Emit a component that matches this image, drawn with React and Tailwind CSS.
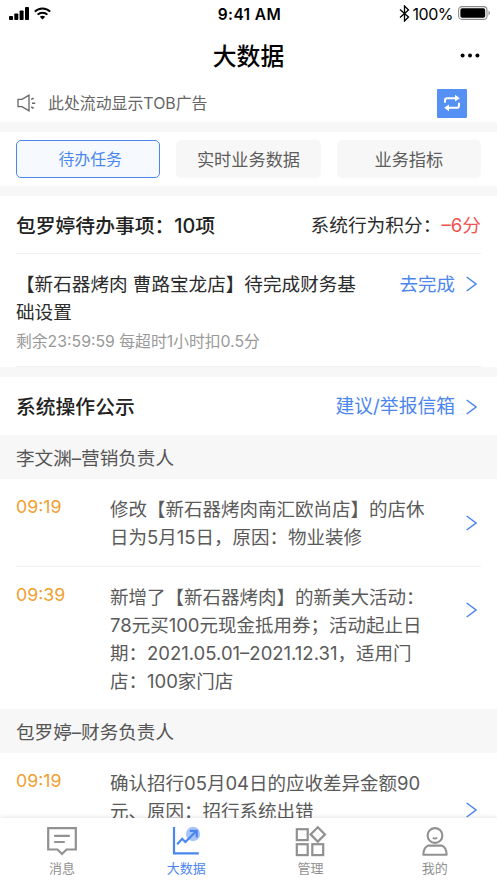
import React, { useState } from "react";

const TABS = ["待办任务", "实时业务数据", "业务指标"];

const LOGS = [
  {
    owner: "李文渊–营销负责人",
    rows: [
      {
        time: "09:19",
        lines: ["修改【新石器烤肉南汇欧尚店】的店休", "日为5月15日，原因：物业装修"],
        rowClass: "h-[87px]",
        arrowClass: "mt-5",
      },
      {
        time: "09:39",
        lines: [
          "新增了【新石器烤肉】的新美大活动：",
          "78元买100元现金抵用券；活动起止日",
          "期：2021.05.01–2021.12.31，适用门",
          "店：100家门店",
        ],
        rowClass: "h-[143px] border-t border-[#f0f0f0]",
        arrowClass: "mt-[19px]",
      },
    ],
  },
  {
    owner: "包罗婷–财务负责人",
    rows: [
      {
        time: "09:19",
        lines: ["确认招行05月04日的应收差异金额90", "元、原因：招行系统出错"],
        rowClass: "h-[116px]",
        arrowClass: "mt-[33px]",
      },
    ],
  },
];

const Arrow = ({ className = "" }) => (
  <svg className={`w-[11px] h-4 shrink-0 ${className}`} viewBox="0 0 11 16" fill="none" stroke="#4b86ee" strokeWidth="1.5">
    <path d="M0.7 1L10 8L0.7 15" />
  </svg>
);

const StatusBar = () => (
  <div className="h-7 shrink-0 grid grid-cols-3 items-center text-black px-[9px]">
    <div className="flex items-center gap-[5px] -mt-[2px]">
      <svg className="w-5 h-[13px]" viewBox="0 0 20 13">
        <rect x="0" y="9" width="4" height="4" rx="0.8" />
        <rect x="5.3" y="6.5" width="4" height="6.5" rx="0.8" />
        <rect x="10.6" y="3.5" width="4" height="9.5" rx="0.8" />
        <rect x="16" y="0" width="4" height="13" rx="0.8" />
      </svg>
      <svg className="w-[17px] h-[13px]" viewBox="0 0 17 13" fill="none" stroke="#000" strokeWidth="2">
        <path d="M0.8 4.6C5 0.3 12 0.3 16.2 4.6" />
        <path d="M3.6 7.6C6.3 5 10.7 5 13.4 7.6" />
        <path d="M5.8 9.8C7.3 8.4 9.7 8.4 11.2 9.8L8.5 12.6Z" fill="#000" stroke="none" />
      </svg>
    </div>
    <div className="text-center text-[15.5px] font-semibold tracking-[0.4px] pl-[2px] pt-[1px]">9:41 AM</div>
    <div className="flex items-center justify-end -mr-[3px] -mt-[2px]">
      <svg className="w-[11px] h-[17px] mr-[3px]" viewBox="0 0 11 17" fill="none" stroke="#000" strokeWidth="1.3">
        <path d="M1 4.5L9.5 12L5.5 16V1L9.5 5L1 12.5" />
      </svg>
      <span className="text-[16px] tracking-[-0.5px] mr-[5px] pt-[2px]">100%</span>
      <svg className="w-[33px] h-[14px]" viewBox="0 0 33 14">
        <rect x="0.6" y="0.6" width="28.4" height="12.8" rx="3.4" fill="none" stroke="#8a8a8a" strokeWidth="1.1" />
        <rect x="2.4" y="2.3" width="24.8" height="9.4" rx="1.8" />
        <path d="M30.5 4.8C32.3 5.4 32.3 8.6 30.5 9.2Z" fill="#8a8a8a" />
      </svg>
    </div>
  </div>
);

const MessageIcon = () => (
  <svg className="w-8 h-8" viewBox="0 0 32 32" fill="none" stroke="#919191" strokeWidth="2.2">
    <path d="M2.2 3.2H29.8V24.5H20.5L16 29L11.5 24.5H2.2Z" />
    <path d="M9 10.8H23M9 17H18" strokeLinecap="round" />
  </svg>
);

const ChartIcon = () => (
  <svg className="w-8 h-8" viewBox="0 0 32 32" fill="none" stroke="#4b86ee" strokeWidth="2.2">
    <circle cx="23" cy="9" r="7.2" fill="#a9c6fb" stroke="none" />
    <path d="M4 2V28.3H28.8" />
    <path d="M7.2 19.2L12.2 13.8L15.4 17L26 6.4" />
    <path d="M19.8 5.8H26.8V12.5" />
  </svg>
);

const ManageIcon = () => (
  <svg className="w-8 h-8" viewBox="0 0 32 32" fill="none" stroke="#919191" strokeWidth="2.2">
    <rect x="1.8" y="4.2" width="10.9" height="10.9" />
    <rect x="1.8" y="19.2" width="10.9" height="10.9" />
    <rect x="17.3" y="19.2" width="10.9" height="10.9" />
    <path d="M22.8 2.2L30 9.4L22.8 16.6L15.6 9.4Z" />
  </svg>
);

const MineIcon = () => (
  <svg className="w-8 h-8" viewBox="0 0 32 32" fill="none" stroke="#919191" strokeWidth="2.1">
    <circle cx="16" cy="10.5" r="7.4" />
    <path d="M13.8 12.6Q16 14.8 18.2 12.6" strokeWidth="1.7" />
    <path d="M9.5 20.6H22.5C25.8 21.8 27.6 24.8 27.6 29.8H4.4C4.4 24.8 6.2 21.8 9.5 20.6Z" strokeLinejoin="round" />
  </svg>
);

const NAV = [
  { label: "消息", icon: MessageIcon },
  { label: "大数据", icon: ChartIcon, active: true },
  { label: "管理", icon: ManageIcon },
  { label: "我的", icon: MineIcon },
];

const App = () => {
  const [tab, setTab] = useState(0);

  return (
    <div className="w-[497px] h-[883px] flex flex-col overflow-hidden bg-white text-[#2b2b2b] whitespace-nowrap font-['Inter','Noto_Sans_CJK_SC',sans-serif]">
      <StatusBar />

      {/* Title */}
      <div className="h-14 shrink-0 flex items-center px-[17px]">
        <div className="w-5" />
        <h1 className="flex-1 text-center text-[23.8px] font-medium text-black pt-[2px]">大数据</h1>
        <svg className="w-5 h-5" viewBox="0 0 20 20">
          <circle cx="2.6" cy="9.5" r="2" />
          <circle cx="10" cy="9.5" r="2" />
          <circle cx="17.4" cy="9.5" r="2" />
        </svg>
      </div>

      {/* Notice */}
      <div className="h-[38px] shrink-0 flex items-center pl-[17px] pr-[30px] text-[#666]">
        <svg className="w-5 h-[18px] mr-[11px]" viewBox="0 0 20 18" fill="none" stroke="#666" strokeWidth="1.3">
          <path d="M1 5.4H5L12 1.2V16.8L5 12.6H1Z" />
          <path d="M14.2 5.4L16.6 4.2M15 9.2H18.2M14.2 13L16.6 14.2" strokeWidth="1.6" />
        </svg>
        <span className="flex-1 text-[15.9px] pt-[2px]">此处流动显示TOB广告</span>
        <button className="w-[30px] h-[29px] bg-[#5590f5] rounded-[1px] flex items-center justify-center">
          <svg className="w-[18px] h-[18px]" viewBox="0 0 18 18" fill="none" stroke="#fff" strokeWidth="2">
            <path d="M2 8.8V6.4Q2 4.2 4.2 4.2H13" />
            <path d="M16 8.8V11.4Q16 13.8 13.8 13.8H5" />
            <path d="M12 0.8L16.8 4.2L12 7.6ZM6 10.4L1.2 13.8L6 17.2Z" fill="#fff" stroke="none" />
          </svg>
        </button>
      </div>

      {/* Tabs */}
      <div className="h-[74px] shrink-0 border-y-[10px] border-[#f7f7f7] px-4 grid grid-cols-3 items-center gap-4">
        {TABS.map((name, i) => (
          <button
            key={name}
            onClick={() => setTab(i)}
            className={
              tab === i
                ? "h-[38px] pt-[2px] pl-1 rounded-[5px] border border-[#4b86ee] bg-[#f6faff] text-[#4b86ee] text-[15.9px]"
                : "h-[38px] pt-[1px] rounded-[5px] bg-[#f7f7f7] text-[#5c5c5c] text-[17.2px]"
            }
          >
            {name}
          </button>
        ))}
      </div>

      {/* Todo */}
      <div className="mx-4 h-[58px] shrink-0 flex items-center justify-between border-b border-[#f0f0f0]">
        <h2 className="text-[19.8px] font-medium text-[#222] pt-1">包罗婷待办事项：10项</h2>
        <div className="text-[18.7px] pt-[3px]">
          系统行为积分：<span className="text-[#f0524f]">–6分</span>
        </div>
      </div>
      <div className="mx-4 h-[113px] shrink-0 pt-4 flex justify-between border-b border-[#f0f0f0]">
        <div>
          <p className="text-[18.6px] leading-7">
            【新石器烤肉 曹路宝龙店】待完成财务基
            <br />
            础设置
          </p>
          <p className="text-[15.8px] leading-8 text-[#999]">剩余23:59:59 每超时1小时扣0.5分</p>
        </div>
        <div className="flex items-center h-7 mr-1 text-[18.5px] text-[#4b86ee]">
          <span className="pt-[1px]">去完成</span>
          <Arrow className="ml-[11px]" />
        </div>
      </div>
      <div className="h-[10px] shrink-0 bg-[#f7f7f7]" />

      {/* Public log */}
      <div className="px-4 h-[58px] shrink-0 flex items-center justify-between">
        <h2 className="text-[19.8px] font-medium text-[#222] pt-1">系统操作公示</h2>
        <div className="flex items-center mr-1 pt-[2px] text-[18.8px] text-[#4b86ee]">
          建议/举报信箱
          <Arrow className="ml-[11px]" />
        </div>
      </div>
      <div className="flex-1 min-h-0 overflow-hidden">
        {LOGS.map((group) => (
          <div key={group.owner}>
            <div className="h-11 px-4 pt-[3px] flex items-center bg-[#f7f7f7] text-[18.6px] text-[#555]">{group.owner}</div>
            {group.rows.map((row) => (
              <div key={row.time} className={`mx-4 flex pt-4 text-[18.5px] leading-7 ${row.rowClass}`}>
                <div className="w-[94px] shrink-0 -mt-[2px] text-[17.8px] text-[#f0a030]">{row.time}</div>
                <div className="flex-1 text-[#5a5a5a]">
                  {row.lines.map((line) => (
                    <div key={line}>{line}</div>
                  ))}
                </div>
                <Arrow className={`mr-1 ${row.arrowClass}`} />
              </div>
            ))}
          </div>
        ))}
      </div>

      {/* Bottom nav */}
      <div className="relative h-[65px] shrink-0 grid grid-cols-4 bg-white shadow-[0_-1px_4px_rgba(0,0,0,0.1)]">
        {NAV.map(({ label, icon: Icon, active }) => (
          <div
            key={label}
            className={`flex flex-col items-center pt-[7px] text-[13px] leading-5 ${active ? "text-[#4b86ee]" : "text-[#919191]"}`}
          >
            <Icon />
            <span className="mt-[1px]">{label}</span>
          </div>
        ))}
      </div>
    </div>
  );
};

export default App;
